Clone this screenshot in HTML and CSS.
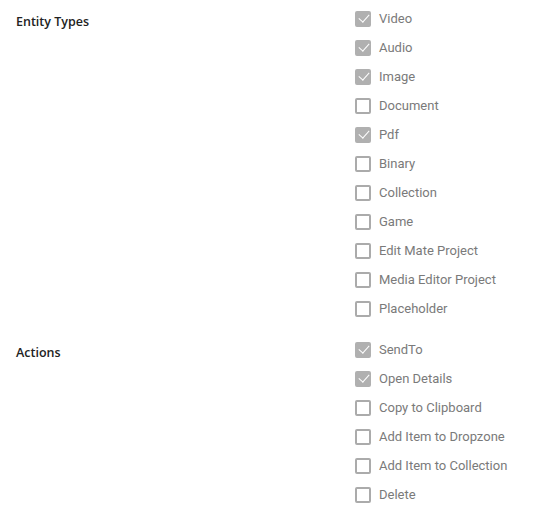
FILE: index.html
```html
<!DOCTYPE html>
<html>
<head>
<meta charset="utf-8">
<link rel="stylesheet" href="styles.css">
</head>
<body>
<div class="form">
  <div class="section">
    <div class="label">Entity Types</div>
    <div class="options">
      <div class="opt"><span class="box checked"></span><span class="txt">Video</span></div>
      <div class="opt"><span class="box checked"></span><span class="txt">Audio</span></div>
      <div class="opt"><span class="box checked"></span><span class="txt">Image</span></div>
      <div class="opt"><span class="box"></span><span class="txt">Document</span></div>
      <div class="opt"><span class="box checked"></span><span class="txt">Pdf</span></div>
      <div class="opt"><span class="box"></span><span class="txt">Binary</span></div>
      <div class="opt"><span class="box"></span><span class="txt">Collection</span></div>
      <div class="opt"><span class="box"></span><span class="txt">Game</span></div>
      <div class="opt"><span class="box"></span><span class="txt">Edit Mate Project</span></div>
      <div class="opt"><span class="box"></span><span class="txt">Media Editor Project</span></div>
      <div class="opt"><span class="box"></span><span class="txt">Placeholder</span></div>
    </div>
  </div>
  <div class="section">
    <div class="label">Actions</div>
    <div class="options">
      <div class="opt"><span class="box checked"></span><span class="txt">SendTo</span></div>
      <div class="opt"><span class="box checked"></span><span class="txt">Open Details</span></div>
      <div class="opt"><span class="box"></span><span class="txt">Copy to Clipboard</span></div>
      <div class="opt"><span class="box"></span><span class="txt">Add Item to Dropzone</span></div>
      <div class="opt"><span class="box"></span><span class="txt">Add Item to Collection</span></div>
      <div class="opt"><span class="box"></span><span class="txt">Delete</span></div>
    </div>
  </div>
</div>
</body>
</html>
```
FILE: styles.css
```css
html, body { margin: 0; padding: 0; background: #fff; }
.form { padding: 4px 0 0 16px; }
.section {
  display: grid;
  grid-template-columns: 339px 1fr;
  padding-bottom: 12px;
}
.label {
  font-family: "Open Sans", sans-serif;
  font-weight: 600;
  font-size: 12.5px;
  color: #222;
  padding-top: 8px;
  line-height: 20px;
}
.options { display: flex; flex-direction: column; }
.opt {
  height: 29px;
  display: flex;
  align-items: center;
  gap: 8px;
}
.box {
  width: 16px;
  height: 16px;
  box-sizing: border-box;
  border: 2px solid #ababab;
  border-radius: 2px;
  position: relative;
  flex: none;
}
.box.checked {
  background: #b0b0b0;
  border-color: #b0b0b0;
}
.box.checked::after {
  content: "";
  position: absolute;
  left: 3.5px;
  top: -0.5px;
  width: 5px;
  height: 9px;
  border-right: 1.3px solid #fff;
  border-bottom: 1.3px solid #fff;
  transform: rotate(42deg);
}
.txt {
  font-family: Roboto, sans-serif;
  font-size: 13px;
  color: #7a7a7a;
}
```
